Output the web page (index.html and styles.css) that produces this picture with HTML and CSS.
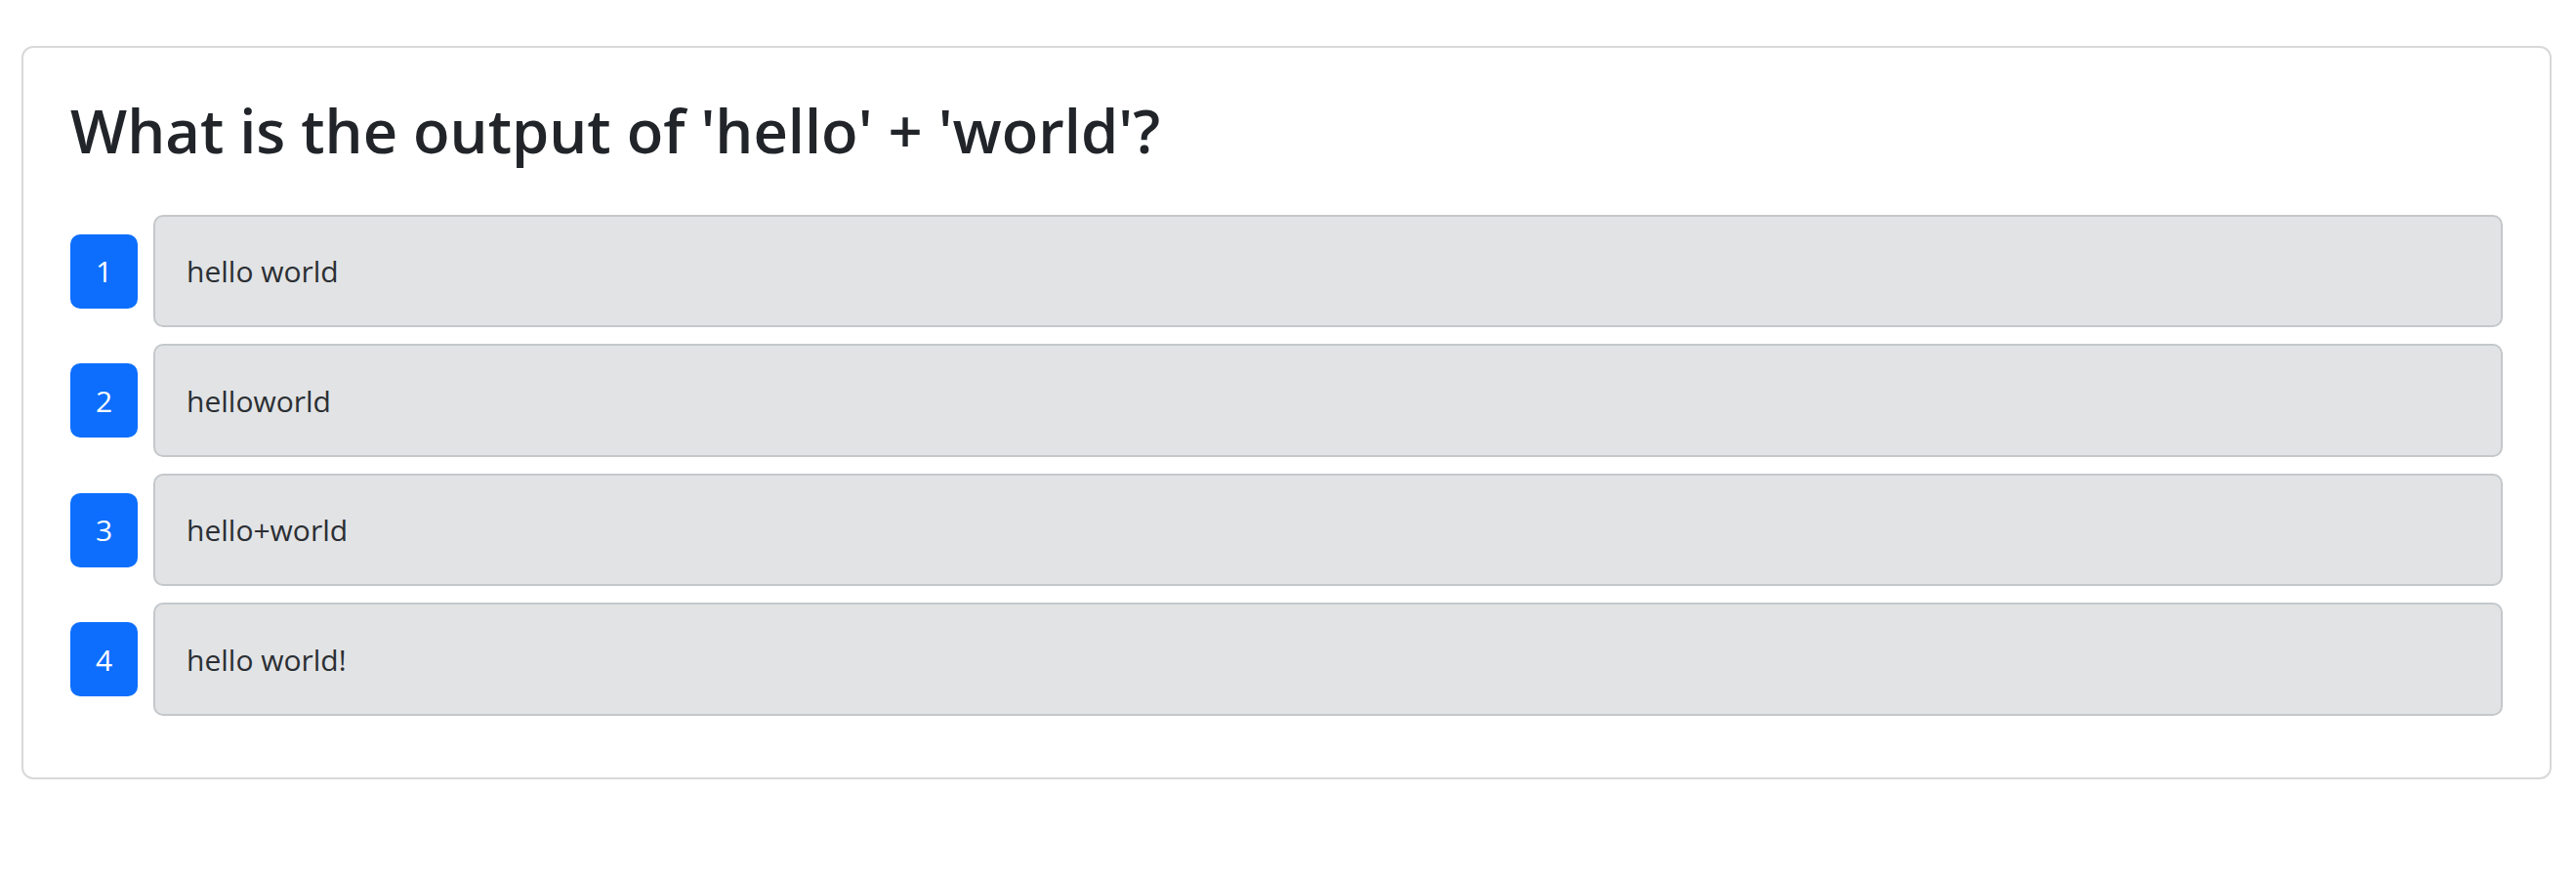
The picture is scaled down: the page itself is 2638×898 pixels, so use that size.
FILE: index.html
```html
<!DOCTYPE html>
<html lang="en">
<head>
<meta charset="utf-8">
<title>Quiz</title>
<link rel="stylesheet" href="styles.css">
</head>
<body>
<div class="card">
  <h2 class="question">What is the output of 'hello' + 'world'?</h2>
  <div class="options">
    <div class="option"><span class="badge">1</span><div class="answer">hello world</div></div>
    <div class="option"><span class="badge">2</span><div class="answer">helloworld</div></div>
    <div class="option"><span class="badge">3</span><div class="answer">hello+world</div></div>
    <div class="option"><span class="badge">4</span><div class="answer">hello world!</div></div>
  </div>
</div>
</body>
</html>
```

FILE: styles.css
```css
* { box-sizing: border-box; }
html, body { margin: 0; background: #ffffff; }
body {
  padding: 47px 25px 0 22px;
  font-family: "Open Sans", "Noto Sans", sans-serif;
  color: #212529;
}
.card {
  border: 2px solid #d9d9d9;
  border-radius: 12px;
  padding: 48px 48px 63px 48px;
  background: #fff;
}
.question {
  margin: 0 0 49px 0;
  font-size: 61.5px;
  font-weight: 600;
  line-height: 1.2;
  color: #212529;
}
.options {
  display: flex;
  flex-direction: column;
  gap: 17px;
}
.option {
  display: flex;
  align-items: center;
  gap: 16px;
}
.badge {
  flex: 0 0 69px;
  height: 76px;
  border-radius: 10px;
  background: #0d6efd;
  color: #fff;
  font-size: 30px;
  display: flex;
  align-items: center;
  justify-content: center;
}
.answer {
  flex: 1;
  height: 115.5px;
  display: flex;
  align-items: center;
  padding: 0 32px;
  background: #e2e3e5;
  border: 2px solid #c4c8cb;
  border-radius: 10px;
  font-size: 30px;
  color: #2b2f33;
}
```
